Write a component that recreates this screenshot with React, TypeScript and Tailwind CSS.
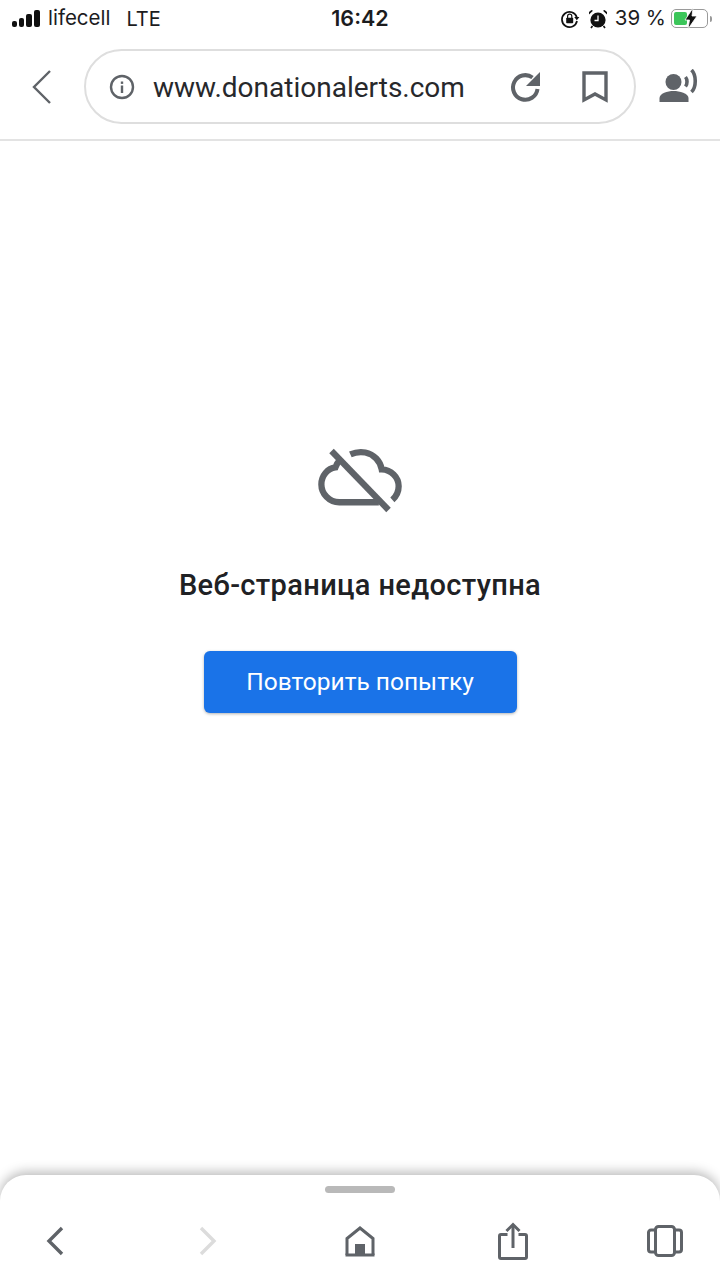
import type { ReactNode } from "react";

const gray = "#5f6368";

function StatusBar() {
  return (
    <div className="h-[37px] flex items-center pl-3 pr-[8px] font-['Inter',sans-serif] text-[#1c1c1e] relative">
      <div className="flex items-end gap-[2px] h-[17px] w-[30px]">
        <span className="w-[5px] h-[6px] rounded-[2px] bg-[#111]" />
        <span className="w-[5px] h-[9px] rounded-[2px] bg-[#111]" />
        <span className="w-[6px] h-[13px] rounded-[2px] bg-[#111]" />
        <span className="w-[6px] h-[17px] rounded-[2px] bg-[#111]" />
      </div>
      <span className="ml-[6px] text-[20.5px] font-normal leading-none">lifecell</span>
      <span className="ml-[16px] text-[20px] font-normal leading-none">LTE</span>
      <span className="absolute left-0 right-0 text-center text-[21.5px] font-semibold leading-none pointer-events-none">16:42</span>
      <div className="ml-auto flex items-center">
        <svg width="20" height="20" viewBox="0 0 20 20" className="mr-[8px]">
          <path d="M16.8 8.2A7.6 7.6 0 1 0 17 12" fill="none" stroke="#111" strokeWidth="1.7" />
          <path d="M14.2 8h5.2l-2.6 3.2z" fill="#111" />
          <rect x="6.2" y="8.8" width="7" height="5.4" rx="0.8" fill="#111" />
          <path d="M7.6 9V7.3a2.1 2.1 0 0 1 4.2 0V9" fill="none" stroke="#111" strokeWidth="1.2" />
        </svg>
        <svg width="20" height="20" viewBox="0 0 20 20" className="mr-[7px]">
          <circle cx="10" cy="11" r="7.6" fill="#111" />
          <path d="M10 6.5V11.5H6.5" fill="none" stroke="#fff" strokeWidth="1.3" />
          <path d="M1 5.6 5 1.8l-1.6-.8L1 3zM19 5.6 15 1.8l1.6-.8L19 3z" fill="#111" />
          <path d="M4.5 17 3 19M15.5 17 17 19" stroke="#111" strokeWidth="1.6" />
        </svg>
        <span className="text-[20.5px] leading-none">39 %</span>
        <div className="ml-[5px] relative w-[37px] h-[19px] rounded-[5px] border border-[#9a9a9a] p-[2px]">
          <div className="h-full w-[13px] rounded-[2px] bg-[#3cc65a]" />
          <svg width="14" height="21" viewBox="0 0 14 21" className="absolute left-[12px] -top-[2px]">
            <path d="M9 0 1 12h4.5L4 21l9-13H8z" fill="#111" stroke="#fff" strokeWidth="0.8" />
          </svg>
        </div>
        <span className="ml-[2px] w-[2px] h-[6px] rounded-r-sm bg-[#9a9a9a]" />
      </div>
    </div>
  );
}

function TopBar() {
  return (
    <div className="h-[104px] flex items-center border-b-2 border-[#e3e3e3]">
      <div className="w-[84px] flex justify-center -mt-[3px]">
        <svg width="24" height="38" viewBox="0 0 24 38">
          <path d="M20 3 4 19l16 16" fill="none" stroke={gray} strokeWidth="2.4" />
        </svg>
      </div>
      <div className="w-[552px] h-[75px] -mt-[3px] rounded-full border-2 border-[#dedede] flex items-center pl-[23px] pr-[26px]">
        <svg width="26" height="26" viewBox="0 0 26 26">
          <circle cx="13" cy="13" r="11" fill="none" stroke={gray} strokeWidth="2.4" />
          <rect x="11.8" y="11.5" width="2.4" height="7.5" fill={gray} />
          <rect x="11.8" y="7.5" width="2.4" height="2.4" fill={gray} />
        </svg>
        <span className="ml-[18px] mt-[2px] font-['Roboto',sans-serif] text-[28px] leading-none text-[#27282b]">www.donationalerts.com</span>
        <svg width="34" height="34" viewBox="0 0 34 34" className="ml-auto -translate-x-[1px]">
          <path d="M28.500 19A12.300 12.300 0 1 1 23.500 7.500" fill="none" stroke={gray} strokeWidth="4" />
          <path d="M31 2v14H17z" fill={gray} />
        </svg>
        <svg width="26" height="32" viewBox="0 0 26 32" className="ml-[38px]">
          <path d="M2 2h22v27l-11-6-11 6z" fill="none" stroke={gray} strokeWidth="3.4" />
        </svg>
      </div>
      <div className="flex-1 flex justify-center pl-[3px] -mt-[4px]">
        <svg width="41" height="34" viewBox="0 0 40 34">
          <circle cx="14" cy="13" r="8" fill={gray} />
          <path d="M0 33v-4c0-4.500 8-7 14-7s15 2.500 15 7v4z" fill={gray} />
          <path d="M26 8c2 2.500 2 7 0 9.500" fill="none" stroke={gray} strokeWidth="3.6" />
          <path d="M32 1c5 5 5 17 0 22" fill="none" stroke={gray} strokeWidth="3.6" />
        </svg>
      </div>
    </div>
  );
}

function NavIcon({ children }: { children: ReactNode }) {
  return <div className="w-[40px] h-[40px] flex items-center justify-center">{children}</div>;
}

function BottomBar() {
  return (
    <div className="h-[105px] rounded-t-[26px] bg-white shadow-[0_-3px_12px_rgba(0,0,0,0.28)] flex flex-col items-center">
      <div className="mt-[11px] w-[70px] h-[7px] rounded-full bg-[#b9b9b9]" />
      <div className="mt-[28px] w-full px-[35px] flex justify-between">
        <NavIcon>
          <svg width="20" height="30" viewBox="0 0 20 30">
            <path d="M17 2 4 15l13 13" fill="none" stroke={gray} strokeWidth="3.4" />
          </svg>
        </NavIcon>
        <NavIcon>
          <svg width="20" height="30" viewBox="0 0 20 30">
            <path d="M3 2 16 15 3 28" fill="none" stroke="#dcdcdc" strokeWidth="3.4" />
          </svg>
        </NavIcon>
        <NavIcon>
          <svg width="32" height="32" viewBox="0 0 32 32">
            <path d="M3 30V13.500L16 3l13 10.500V30" fill="none" stroke={gray} strokeWidth="3" />
            <path d="M1.500 30h29" stroke={gray} strokeWidth="3" />
            <rect x="11" y="19" width="10" height="11" fill={gray} />
          </svg>
        </NavIcon>
        <NavIcon>
          <svg width="30" height="38" viewBox="0 0 30 38">
            <path d="M9.500 12.500H3a1.500 1.500 0 0 0-1.500 1.500v21A1.500 1.500 0 0 0 3 36.500h24a1.500 1.500 0 0 0 1.500-1.500V14a1.500 1.500 0 0 0-1.500-1.500h-6.500" fill="none" stroke={gray} strokeWidth="3" />
            <path d="M15 26V3" stroke={gray} strokeWidth="3" />
            <path d="M8.500 9 15 2.500 21.500 9" fill="none" stroke={gray} strokeWidth="3" />
          </svg>
        </NavIcon>
        <NavIcon>
          <svg width="36" height="32" viewBox="0 0 36 32">
            <rect x="8.500" y="1.500" width="19" height="29" rx="3" fill="none" stroke={gray} strokeWidth="3" />
            <path d="M8.500 5H4a2.500 2.500 0 0 0-2.500 2.500v17A2.500 2.500 0 0 0 4 27h4.500M27.500 5H32a2.500 2.500 0 0 1 2.500 2.500v17A2.500 2.500 0 0 1 32 27h-4.500" fill="none" stroke={gray} strokeWidth="3" />
          </svg>
        </NavIcon>
      </div>
    </div>
  );
}

export default function App() {
  return (
    <div className="w-[720px] h-[1280px] bg-white flex flex-col overflow-hidden">
      <StatusBar />
      <TopBar />
      <main className="flex-1 flex flex-col items-center pt-[307px]">
        <svg width="85" height="66" viewBox="0 0 88 66">
          <path d="M33.500 5.500C39 3 44 2.500 49 3.500c9 1.800 15.500 9 17 17.500 9.500.5 17.500 7.500 17.500 17.500 0 6-2.700 10.700-6.500 14" fill="none" stroke={gray} strokeWidth="6.500" />
          <path d="M22.500 11.500c-2 2-3.500 4.500-4.500 7.500C10 20 3.500 27.500 3.500 36.500 3.500 46 11.500 55 22 55h41" fill="none" stroke={gray} strokeWidth="6.500" />
          <path d="M14 2 73 63" stroke={gray} strokeWidth="6.500" />
        </svg>
        <h1 className="mt-[54px] font-['Roboto',sans-serif] font-medium text-[29px] leading-[34px] text-[#202124] tracking-[0.35px]">Веб-страница недоступна</h1>
        <button type="button" className="mt-[49px] w-[313px] h-[62px] rounded-[6px] bg-[#1a73e8] shadow-[0_1px_3px_rgba(60,64,67,0.4)] text-white font-['Roboto',sans-serif] text-[24.5px]">
          Повторить попытку
        </button>
      </main>
      <BottomBar />
    </div>
  );
}
